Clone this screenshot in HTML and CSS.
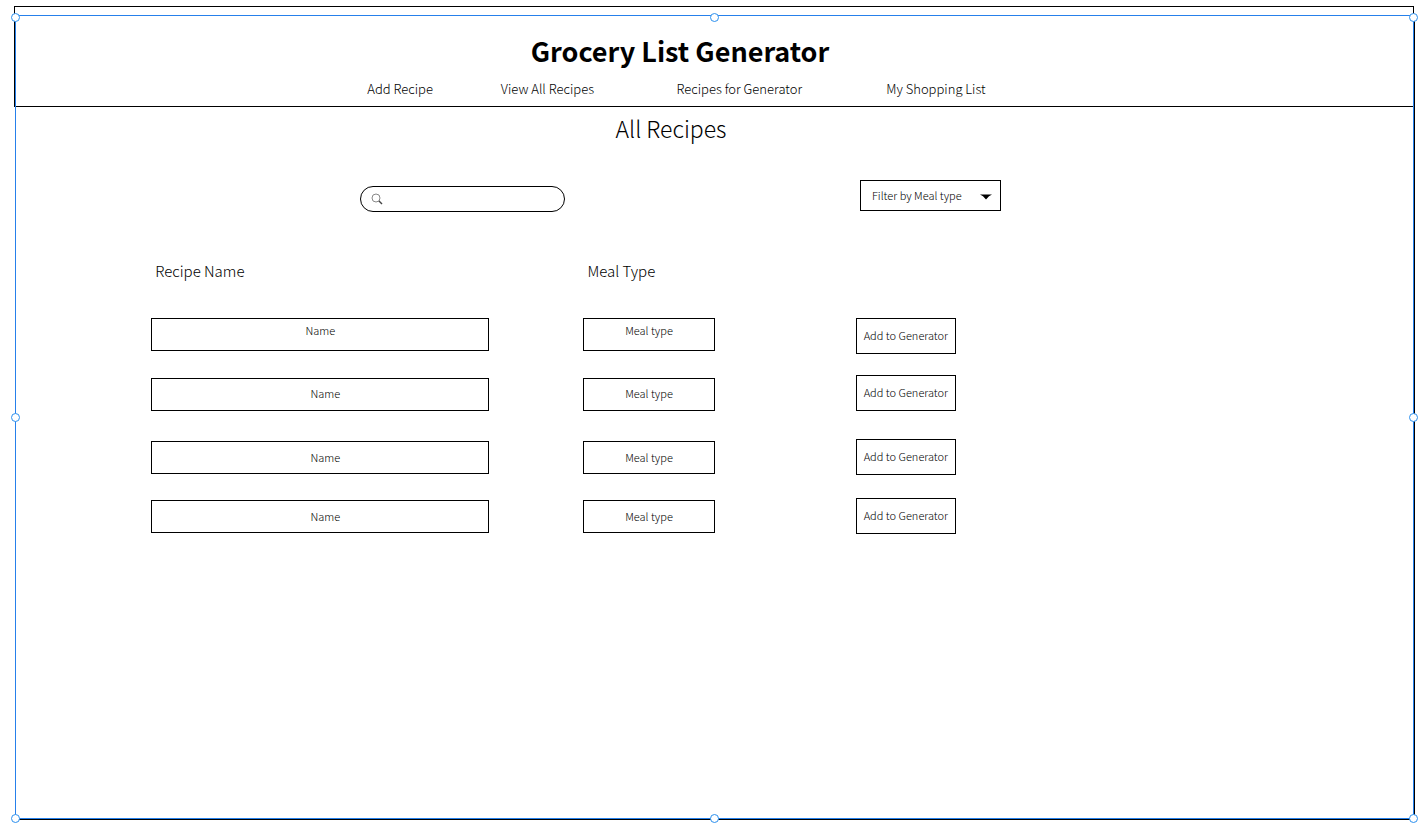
FILE: index.html
```html
<!DOCTYPE html>
<html lang="en">
<head>
<meta charset="utf-8">
<title>Grocery List Generator</title>
<meta name="viewport" content="width=device-width, initial-scale=1">
<link rel="stylesheet" href="styles.css">
</head>
<body>
<div class="workspace">
  <header class="site-header">
    <h1 class="site-title">Grocery List Generator</h1>
    <nav class="site-nav">
      <a href="#add">Add Recipe</a>
      <a href="#all">View All Recipes</a>
      <a href="#generator">Recipes for Generator</a>
      <a href="#list">My Shopping List</a>
    </nav>
  </header>
  <main class="content">
    <h2 class="page-title">All Recipes</h2>
    <div class="toolbar">
      <label class="search">
        <svg class="search-icon" viewBox="0 0 12 12" aria-hidden="true"><circle cx="5" cy="5" r="4" fill="none" stroke="#888"/><path d="M8 8l3 3" fill="none" stroke="#444" stroke-width="1.4"/></svg>
        <input class="search-input" type="search" aria-label="Search recipes">
      </label>
      <div class="filter">
        <select class="filter-select" aria-label="Filter by meal type"><option>Filter by Meal type</option></select>
        <svg class="filter-arrow" viewBox="0 0 12 6" aria-hidden="true"><path d="M0 0.5h12Q9 1.5 6 5.500Q3 1.5 0 0.500z"/></svg>
      </div>
    </div>
    <table class="recipes">
      <colgroup><col class="col-name"><col class="col-type"><col></colgroup>
      <thead>
        <tr><th scope="col">Recipe Name</th><th scope="col">Meal Type</th><td></td></tr>
      </thead>
      <tbody>
        <tr class="row-raised">
          <td><div class="box">Name</div></td>
          <td><div class="box">Meal type</div></td>
          <td><button class="add" type="button">Add to Generator</button></td>
        </tr>
        <tr class="row-spaced">
          <td><div class="box box-name">Name</div></td>
          <td><div class="box">Meal type</div></td>
          <td><button class="add" type="button">Add to Generator</button></td>
        </tr>
        <tr>
          <td><div class="box box-name">Name</div></td>
          <td><div class="box">Meal type</div></td>
          <td><button class="add" type="button">Add to Generator</button></td>
        </tr>
        <tr>
          <td><div class="box box-name">Name</div></td>
          <td><div class="box">Meal type</div></td>
          <td><button class="add" type="button">Add to Generator</button></td>
        </tr>
      </tbody>
    </table>
  </main>
  <div class="artboard" aria-hidden="true">
    <div class="selection">
      <span class="handle top left"></span><span class="handle top center"></span><span class="handle top right"></span>
      <span class="handle middle left"></span><span class="handle middle right"></span>
      <span class="handle bottom left"></span><span class="handle bottom center"></span><span class="handle bottom right"></span>
    </div>
  </div>
</div>
</body>
</html>
```

FILE: styles.css
```css
* { box-sizing: border-box; }

body {
  margin: 0;
  padding: 6px 14px 7px;
  background: #fff;
  color: #000;
  font-family: "Noto Sans CJK SC", "Noto Sans", sans-serif;
  font-weight: 300;
}

.workspace {
  position: relative;
  min-height: calc(100vh - 13px);
}

/* Header */
.site-header {
  border: 1px solid #000;
  padding: 24px 0 7px;
}

.site-title {
  margin: 0;
  padding-right: 68px;
  font-size: 27px;
  font-weight: 700;
  line-height: 40px;
  text-align: center;
}

.site-nav {
  display: grid;
  grid-template-columns: 133fr 175fr 209fr 100fr;
  margin: 7px 30.5% 0 25.2%;
}

.site-nav a {
  color: inherit;
  font-size: 13px;
  line-height: 21px;
  text-decoration: none;
  white-space: nowrap;
}

/* Page */
.page-title {
  margin: 0;
  padding-right: 86px;
  font-size: 23px;
  font-weight: 300;
  line-height: 42px;
  text-align: center;
}

.toolbar {
  display: flex;
  justify-content: space-between;
  align-items: flex-end;
  margin: 31px 29.5% 0 24.7%;
}

.search {
  display: flex;
  align-items: center;
  gap: 6px;
  width: 205px;
  height: 26px;
  padding: 0 12px 0 10px;
  border: 1px solid #000;
  border-radius: 13px;
}

.search-icon {
  flex: none;
  width: 12px;
  height: 12px;
}

.search-input {
  flex: 1;
  min-width: 0;
  border: 0;
  outline: 0;
  background: transparent;
  font: inherit;
  font-size: 11px;
  line-height: 18px;
}

.filter {
  display: grid;
  align-items: center;
  padding-bottom: 1px;
}

.filter-select,
.filter-arrow {
  grid-area: 1 / 1;
}

.filter-select {
  appearance: none;
  width: 141px;
  height: 31px;
  padding: 0 28px 2px 11px;
  border: 1px solid #000;
  border-radius: 0;
  background: #fff;
  color: inherit;
  font: inherit;
  font-size: 11px;
}

.filter-arrow {
  justify-self: end;
  width: 12px;
  height: 6px;
  margin: 3px 9px 0 0;
  pointer-events: none;
}

/* Recipe table */
.recipes {
  table-layout: fixed;
  width: 57.5%;
  margin: 47px 0 0 9.8%;
  border-collapse: collapse;
}

.col-name { width: 53.7%; }
.col-type { width: 33.8%; }

.recipes th,
.recipes td {
  padding: 0 94px 23px 0;
  text-align: left;
  vertical-align: middle;
}

.recipes th {
  padding: 0 0 35px 4px;
  font-size: 15px;
  font-weight: 300;
  line-height: 24px;
}

.recipes td:nth-child(2) { padding-right: 141px; }
.recipes td:last-child { padding-right: 0; }

.recipes .row-raised td {
  padding-bottom: 21px;
  vertical-align: top;
}

.recipes .row-spaced td {
  padding-bottom: 28px;
  vertical-align: bottom;
}

.box {
  padding: 6px 0 7px;
  border: 1px solid #000;
  font-size: 11px;
  line-height: 18px;
  text-align: center;
}

.box-name { padding-left: 10px; }
.row-raised .box { padding: 2px 0 11px; }
.row-spaced .box { padding-top: 5px; padding-bottom: 8px; }

.add {
  display: block;
  width: 100%;
  height: 36px;
  padding: 0 0 2px;
  border: 1px solid #000;
  border-radius: 0;
  background: #fff;
  color: inherit;
  font: inherit;
  font-size: 11px;
  white-space: nowrap;
}

/* Artboard edge and selection outline over the page */
.artboard {
  position: absolute;
  inset: 9px -1px 0 1px;
  border: solid #000;
  border-width: 0 1px 1px 0;
  pointer-events: none;
}

.selection {
  position: absolute;
  inset: 0;
  border: 1px solid #2680eb;
}

.handle {
  position: absolute;
  width: 9px;
  height: 9px;
  border: 1px solid #2c90ee;
  border-radius: 50%;
  background: #fff;
}

.handle.top { top: -3px; }
.handle.middle { top: calc(50% - 4px); }
.handle.bottom { bottom: -5px; }
.handle.left { left: -5px; }
.handle.center { left: calc(50% - 5px); }
.handle.right { right: -5px; }
```
